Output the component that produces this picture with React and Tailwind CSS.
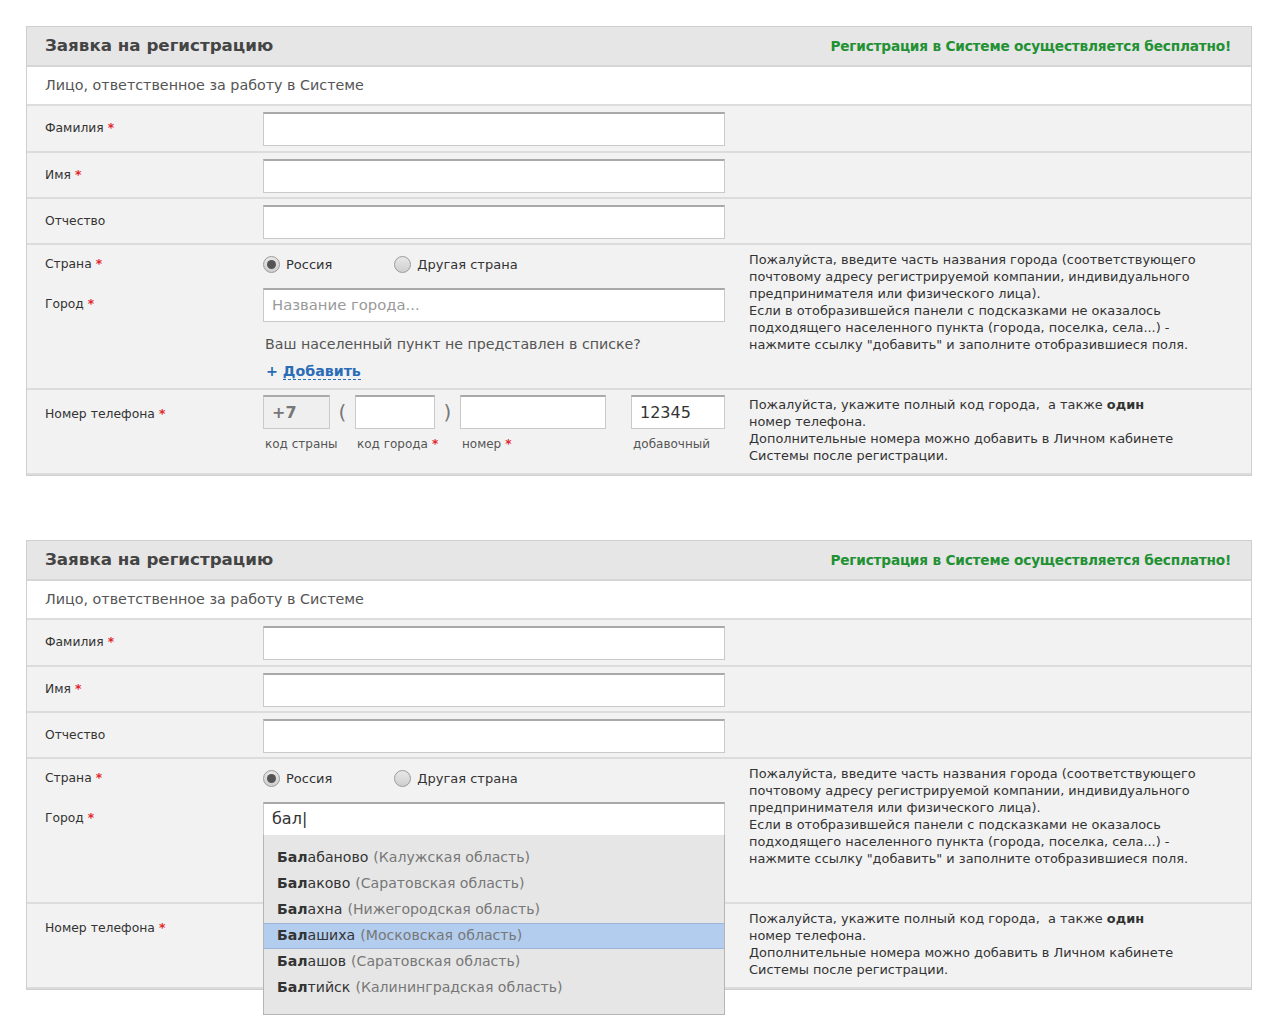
import React from 'react';

const font = { fontFamily: '"DejaVu Sans", Verdana, sans-serif' };

const Star = () => <span className="text-[#e3262b] font-bold ml-1">*</span>;

const TextInput = ({ value, placeholder, className = '', grey }) => (
  <div
    className={`h-[34px] border border-[#c9c9c9] border-t-[#a9a9a9] border-t-2 flex items-center px-2 text-[16px] ${
      grey ? 'bg-[#efefef] text-[#777] font-bold' : 'bg-white text-[#333]'
    } ${className}`}
  >
    {value ? <span>{value}</span> : <span className="text-[#999] text-[14.8px]">{placeholder}</span>}
  </div>
);

const Radio = ({ checked, label }) => (
  <div className="flex items-center gap-[6px] text-[13px] text-[#333]">
    <span className="w-[17px] h-[17px] rounded-full border border-[#9a9a9a] bg-gradient-to-b from-[#e8e8e8] to-[#cfcfcf] flex items-center justify-center">
      {checked && <span className="w-[9px] h-[9px] rounded-full bg-[#555]" />}
    </span>
    {label}
  </div>
);

const Row = ({ label, children, hint, className = '' }) => (
  <div className={`flex border-b-2 border-[#dcdcdc] bg-[#f2f2f2] ${className}`}>
    <div className="w-[236px] shrink-0 pl-[18px]">{label}</div>
    <div className="w-[462px] shrink-0">{children}</div>
    <div className="pl-[24px] pr-4 text-[12.9px] leading-[17px] text-[#333] whitespace-nowrap">{hint}</div>
  </div>
);

const suggestions = [
  ['Бал', 'абаново', 'Калужская область'],
  ['Бал', 'аково', 'Саратовская область'],
  ['Бал', 'ахна', 'Нижегородская область'],
  ['Бал', 'ашиха', 'Московская область'],
  ['Бал', 'ашов', 'Саратовская область'],
  ['Бал', 'тийск', 'Калининградская область'],
];

const Card = ({ autocomplete }) => (
  <div className="border border-[#cfcfcf] relative" style={font}>
    <div className="h-[40px] bg-[#e6e6e6] border-b-2 border-[#d6d6d6] flex items-center justify-between pl-[18px] pr-[20px]">
      <span className="text-[16.7px] font-bold text-[#444]">Заявка на регистрацию</span>
      <span className="text-[13.7px] font-bold text-[#229133] tracking-[-0.2px]">
        Регистрация в Системе осуществляется бесплатно!
      </span>
    </div>
    <div className="h-[39px] bg-white border-b-2 border-[#dcdcdc] flex items-center pl-[18px] text-[14.3px] text-[#555]">
      Лицо, ответственное за работу в Системе
    </div>

    <Row
      className="h-[47px]"
      label={<div className="pt-[13px] text-[12.3px] text-[#333]">Фамилия<Star /></div>}
    >
      <TextInput className="mt-[6px]" />
    </Row>
    <Row
      className="h-[46px]"
      label={<div className="pt-[13px] text-[12.3px] text-[#333]">Имя<Star /></div>}
    >
      <TextInput className="mt-[6px]" />
    </Row>
    <Row
      className="h-[46px]"
      label={<div className="pt-[13px] text-[12.3px] text-[#333]">Отчество</div>}
    >
      <TextInput className="mt-[6px]" />
    </Row>

    <Row
      className="h-[145px]"
      label={
        <div className="text-[12.3px] text-[#333]">
          <div className="pt-[10px]">Страна<Star /></div>
          <div className="pt-[22px]">Город<Star /></div>
        </div>
      }
      hint={
        <div className="pt-[6px]">
          Пожалуйста, введите часть названия города (соответствующего
          <br />
          почтовому адресу регистрируемой компании, индивидуального
          <br />
          предпринимателя или физического лица).
          <br />
          Если в отобразившейся панели с подсказками не оказалось
          <br />
          подходящего населенного пункта (города, поселка, села...) -
          <br />
          нажмите ссылку "добавить" и заполните отобразившиеся поля.
        </div>
      }
    >
      <div className="relative">
        <div className="flex gap-[62px] pt-[10px]">
          <Radio checked label="Россия" />
          <Radio label="Другая страна" />
        </div>
        {autocomplete ? (
          <>
            <TextInput className="mt-[13px]" value={<span className="text-[16px]">бал|</span>} />
            <div className="absolute left-0 top-[76px] w-[462px] h-[180px] bg-[#e6e6e6] border border-[#b5b5b5] border-t-0 z-10 pt-[10px] text-[14.1px]">
              {suggestions.map(([b, rest, region], i) => (
                <div
                  key={i}
                  className={`h-[26px] flex items-center px-[13px] ${
                    i === 3 ? 'bg-[#b3cdee] border-y border-[#9db6d8]' : ''
                  }`}
                >
                  <span className="font-bold text-[#333]">{b}</span>
                  <span className="text-[#333]">{rest}</span>
                  <span className="text-[#777] ml-[5px]">({region})</span>
                </div>
              ))}
            </div>
          </>
        ) : (
          <>
            <TextInput className="mt-[13px]" placeholder="Название города..." />
            <div className="pl-[2px] pt-[12px] text-[14.2px] text-[#555]">
              Ваш населенный пункт не представлен в списке?
            </div>
            <div className="pl-[3px] pt-[6px] text-[14.2px] font-bold text-[#2b6cb6]">
              +{' '}
              <span className="border-b border-dashed border-[#2b6cb6]">Добавить</span>
            </div>
          </>
        )}
      </div>
    </Row>

    <Row
      className="h-[85px] border-b-0"
      label={<div className="pt-[15px] text-[12.4px] text-[#333]">Номер телефона<Star /></div>}
      hint={
        <div className="pt-[6px]">
          Пожалуйста, укажите полный код города,&nbsp; а также <b>один</b>
          <br />
          номер телефона.
          <br />
          Дополнительные номера можно добавить в Личном кабинете
          <br />
          Системы после регистрации.
        </div>
      }
    >
      <div className="flex items-start pt-[5px] text-[#666]">
        <div className="w-[67px]">
          <TextInput grey value="+7" />
          <div className="pt-[6px] pl-[2px] text-[12px] text-[#555] whitespace-nowrap">код страны</div>
        </div>
        <span className="w-[25px] text-center text-[20px] leading-[34px] text-[#777]">(</span>
        <div className="w-[80px]">
          <TextInput />
          <div className="pt-[6px] pl-[2px] text-[12px] text-[#555] whitespace-nowrap">код города<Star /></div>
        </div>
        <span className="w-[25px] text-center text-[20px] leading-[34px] text-[#777]">)</span>
        <div className="w-[146px]">
          <TextInput />
          <div className="pt-[6px] pl-[2px] text-[12px] text-[#555]">номер<Star /></div>
        </div>
        <div className="w-[94px] ml-[25px]">
          <TextInput value="12345" />
          <div className="pt-[6px] pl-[2px] text-[12px] text-[#555]">добавочный</div>
        </div>
      </div>
    </Row>
  </div>
);

export default function App() {
  return (
    <div className="bg-white min-h-[1024px] pt-[26px] px-[26px] w-[1261px]">
      <div className="w-[1226px]">
        <Card />
        <div className="h-[64px]" />
        <Card autocomplete />
      </div>
    </div>
  );
}
